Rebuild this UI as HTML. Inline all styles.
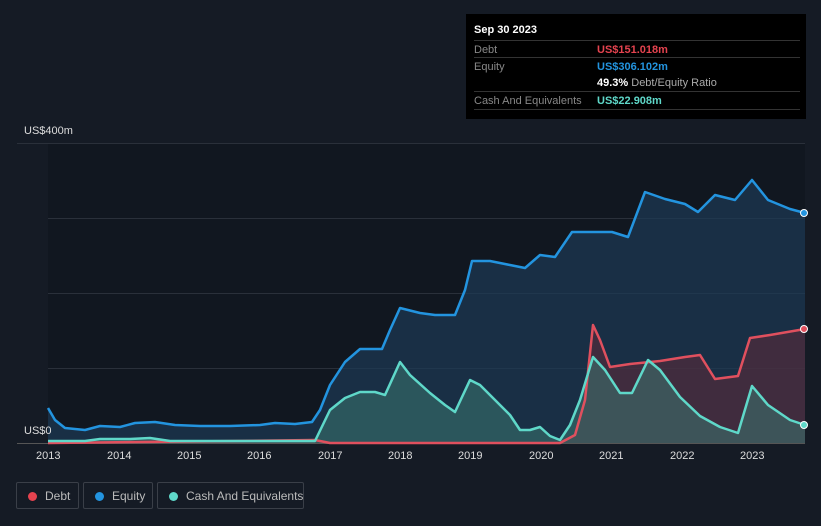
<!DOCTYPE html><html><head><style>
body{margin:0;width:821px;height:526px;background:#151b25;font-family:"Liberation Sans",sans-serif;overflow:hidden;position:relative}
.tt{position:absolute;left:466px;top:14px;width:340px;height:105px;background:#000;color:#fff;font-size:11px}
.r{position:absolute;left:8px;right:6px;border-top:1px solid #333;height:18px;line-height:18px}
.l{color:#888;position:absolute;left:0}
.v{position:absolute;left:123px;font-weight:bold}
.leg{position:absolute;top:482px;height:27px;border:1px solid #3a3f48;border-radius:2px;color:#bbb;font-size:12px;line-height:27px;box-sizing:border-box;white-space:nowrap;overflow:hidden}
.dot{display:inline-block;width:9px;height:9px;border-radius:50%;margin:0 8px 0 11px;vertical-align:-1px}
.ax{position:absolute;color:#ddd;font-size:11px}
</style></head><body>
<svg width="821" height="526" style="position:absolute;left:0;top:0">
<rect x="48" y="143" width="757" height="300" fill="#111720"/>
<g stroke="#2a303a" stroke-width="1"><line x1="17" y1="143.5" x2="805" y2="143.5"/><line x1="48" y1="218.5" x2="805" y2="218.5"/><line x1="48" y1="293.5" x2="805" y2="293.5"/><line x1="48" y1="368.5" x2="805" y2="368.5"/><line x1="17" y1="443.5" x2="805" y2="443.5" stroke="#555"/></g>
<path d="M48,408 L55,420 65,428 85,430 100,426 120,427 135,423 155,422 175,425 200,426 230,426 260,425 275,423 295,424 312,422 320,410 330,385 345,362 360,349 382,349 390,330 400,308 420,313 435,315 455,315 465,290 472,261 490,261 510,265 525,268 540,255 555,257 572,232 612,232 628,237 645,192 665,199 685,204 698,212 715,195 735,200 752,180 768,200 790,209 805,213 L805,443 48,443Z" fill="#1c3a55" fill-opacity="0.7"/>
<path d="M48,443 L235,441 315,440 330,443 560,443 575,435 585,400 593,325 600,340 610,367 630,364 660,361 685,357 700,355 715,379 738,376 750,338 770,335 805,329 L805,443Z" fill="#5a2c3a" fill-opacity="0.6"/>
<path d="M48,441 L85,441 100,439 130,439 150,438 170,441 315,441 330,410 345,398 360,392 375,392 385,395 400,362 410,375 430,393 445,405 455,412 470,380 480,385 495,400 510,415 520,430 530,430 540,427 550,436 560,440 570,425 580,400 593,357 605,370 620,393 632,393 648,360 660,370 680,397 700,416 720,427 738,433 752,386 768,405 790,420 805,425 L805,443 48,443Z" fill="#3b7770" fill-opacity="0.55"/>
<g fill="none" stroke-width="2.5" stroke-linejoin="round">
<path d="M48,408 L55,420 65,428 85,430 100,426 120,427 135,423 155,422 175,425 200,426 230,426 260,425 275,423 295,424 312,422 320,410 330,385 345,362 360,349 382,349 390,330 400,308 420,313 435,315 455,315 465,290 472,261 490,261 510,265 525,268 540,255 555,257 572,232 612,232 628,237 645,192 665,199 685,204 698,212 715,195 735,200 752,180 768,200 790,209 805,213" stroke="#2394df"/>
<path d="M48,443 L235,441 315,440 330,443 560,443 575,435 585,400 593,325 600,340 610,367 630,364 660,361 685,357 700,355 715,379 738,376 750,338 770,335 805,329" stroke="#e0505e"/>
<path d="M48,441 L85,441 100,439 130,439 150,438 170,441 315,441 330,410 345,398 360,392 375,392 385,395 400,362 410,375 430,393 445,405 455,412 470,380 480,385 495,400 510,415 520,430 530,430 540,427 550,436 560,440 570,425 580,400 593,357 605,370 620,393 632,393 648,360 660,370 680,397 700,416 720,427 738,433 752,386 768,405 790,420 805,425" stroke="#5fd8c9"/>
</g>
<circle cx="804" cy="213" r="3.5" fill="#2394df" stroke="#fff" stroke-width="1"/>
<circle cx="804" cy="329" r="3.5" fill="#e0505e" stroke="#fff" stroke-width="1"/>
<circle cx="804" cy="425" r="3.5" fill="#5fd8c9" stroke="#fff" stroke-width="1"/>
</svg>
<div class="ax" style="left:24px;top:125px">US$400m</div>
<div class="ax" style="left:24px;top:425px">US$0</div>
<div class="ax" style="left:36px;top:450px">2013</div><div class="ax" style="left:107px;top:450px">2014</div><div class="ax" style="left:177px;top:450px">2015</div><div class="ax" style="left:247px;top:450px">2016</div><div class="ax" style="left:318px;top:450px">2017</div><div class="ax" style="left:388px;top:450px">2018</div><div class="ax" style="left:458px;top:450px">2019</div><div class="ax" style="left:529px;top:450px">2020</div><div class="ax" style="left:599px;top:450px">2021</div><div class="ax" style="left:670px;top:450px">2022</div><div class="ax" style="left:740px;top:450px">2023</div>
<div class="tt">
<div style="position:absolute;left:8px;top:10px;font-weight:bold">Sep 30 2023</div>
<div class="r" style="top:26px"><span class="l">Debt</span><span class="v" style="color:#e5434f">US$151.018m</span></div>
<div class="r" style="top:43px"><span class="l">Equity</span><span class="v" style="color:#2394df">US$306.102m</span></div>
<div class="r" style="top:60px;border:0"><span class="v">49.3% <span style="color:#aaa;font-weight:normal">Debt/Equity Ratio</span></span></div>
<div class="r" style="top:77px"><span class="l">Cash And Equivalents</span><span class="v" style="color:#5fd8c9">US$22.908m</span></div>
<div class="r" style="top:95px;height:0"></div>
</div>
<div class="leg" style="left:16px;width:63px"><span class="dot" style="background:#e5434f"></span>Debt</div>
<div class="leg" style="left:83px;width:70px"><span class="dot" style="background:#2394df"></span>Equity</div>
<div class="leg" style="left:157px;width:147px"><span class="dot" style="background:#5fd8c9"></span>Cash And Equivalents</div>
</body></html>
